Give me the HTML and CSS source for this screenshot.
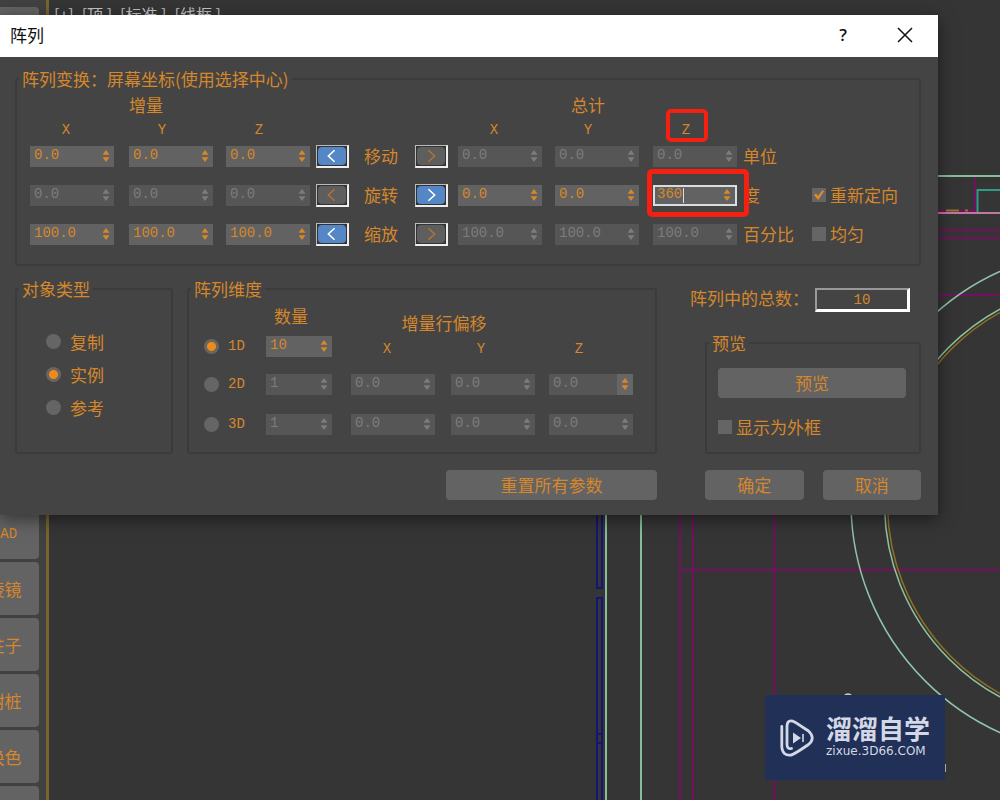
FILE: index.html
```html
<!DOCTYPE html>
<html lang="zh-CN">
<head>
<meta charset="utf-8">
<title>阵列</title>
<link rel="stylesheet" href="styles.css">
</head>
<body>
<div class="workspace">
  <aside class="toolbar">
    <button class="tool" aria-label="工具"></button>
    <div class="tool-group">
      <button class="tool latin">CAD</button>
      <button class="tool">棱镜</button>
      <button class="tool">柱子</button>
      <button class="tool">树桩</button>
      <button class="tool">换色</button>
      <button class="tool" aria-label="更多"></button>
    </div>
  </aside>
  <main class="viewport">
    <div class="view-menu"><span>[+]</span><span>[顶 ]</span><span>[标准 ]</span><span>[线框 ]</span></div>
  </main>

  <svg class="drawing" aria-hidden="true">
    <g fill="none" stroke="#74105f" stroke-width="2">
      <path d="M680 510V800M693 510V800M774.500 510V800M680 570H1000M930 230H1000M930 238H1000M930 295H1000M930 211H976M975 177V212"/>
    </g>
    <g fill="none" stroke="#151577" stroke-width="2">
      <path d="M597 510V588H602V510M597 800V598H602V800M597 734H602M597 743H602"/>
    </g>
    <path d="M606 510V800M641 510V800M930 176H1000" fill="none" stroke="#86bd9b" stroke-width="2"/>
    <path d="M1000 190H977.500V212" fill="none" stroke="#2f9c85" stroke-width="2"/>
    <path d="M930 213H1000" stroke="#c078a0" stroke-width="2"/>
    <path d="M946 210.500H959M965 210.500H968" stroke="#8a7a28" stroke-width="2"/>
    <g fill="none" stroke-width="1.500">
      <circle cx="1104" cy="502" r="253" stroke="#8fc4ab"/>
      <circle cx="1105" cy="503" r="217.500" stroke="#8f731f"/>
      <circle cx="1105" cy="503" r="220.500" stroke="#8fc4a0"/>
    </g>
    <path d="M844 696Q848 692 852 696M945 764V772" fill="none" stroke="#ccc" stroke-width="1.500"/>
  </svg>

  <section class="dialog" role="dialog" aria-labelledby="dlg-title">
    <header class="titlebar">
      <h1 id="dlg-title">阵列</h1>
      <button class="win-btn" aria-label="帮助">?</button>
      <button class="win-btn" aria-label="关闭"><svg width="16" height="16" viewBox="0 0 16 16"><path d="M1 1L15 15M15 1L1 15" stroke="#111" stroke-width="1.500"/></svg></button>
    </header>
    <form class="body">
      <fieldset class="group">
        <legend>阵列变换：屏幕坐标(使用选择中心)</legend>
        <div class="transform">
          <span class="caption c2">增量</span><span class="caption c8 head-wide">总计</span>
          <span class="axis c1">X</span><span class="axis c2">Y</span><span class="axis c3">Z</span>
          <span class="axis c7">X</span><span class="axis c8">Y</span><span class="axis c9 marked">Z</span>

          <span class="spin c1"><input aria-label="移动增量 X" value="0.0"><i></i></span>
          <span class="spin"><input aria-label="移动增量 Y" value="0.0"><i></i></span>
          <span class="spin"><input aria-label="移动增量 Z" value="0.0"><i></i></span>
          <button type="button" class="dir on" aria-label="移动增量"><svg viewBox="0 0 27 17"><path d="M16 3L10 8.500L16 14"/></svg></button>
          <span>移动</span>
          <button type="button" class="dir" aria-label="移动总计"><svg viewBox="0 0 27 17"><path d="M11 3L17 8.500L11 14"/></svg></button>
          <span class="spin off"><input aria-label="移动总计 X" value="0.0" disabled><i></i></span>
          <span class="spin off"><input aria-label="移动总计 Y" value="0.0" disabled><i></i></span>
          <span class="spin off"><input aria-label="移动总计 Z" value="0.0" disabled><i></i></span>
          <span>单位</span>

          <span class="spin off c1"><input aria-label="旋转增量 X" value="0.0" disabled><i></i></span>
          <span class="spin off"><input aria-label="旋转增量 Y" value="0.0" disabled><i></i></span>
          <span class="spin off"><input aria-label="旋转增量 Z" value="0.0" disabled><i></i></span>
          <button type="button" class="dir" aria-label="旋转增量"><svg viewBox="0 0 27 17"><path d="M16 3L10 8.500L16 14"/></svg></button>
          <span>旋转</span>
          <button type="button" class="dir on" aria-label="旋转总计"><svg viewBox="0 0 27 17"><path d="M11 3L17 8.500L11 14"/></svg></button>
          <span class="spin"><input aria-label="旋转总计 X" value="0.0"><i></i></span>
          <span class="spin"><input aria-label="旋转总计 Y" value="0.0"><i></i></span>
          <span class="spin active marked"><input aria-label="旋转总计 Z" value="360"><b class="caret"></b><i></i></span>
          <span>度</span>
          <label class="check"><input type="checkbox" checked>重新定向</label>

          <span class="spin c1"><input aria-label="缩放增量 X" value="100.0"><i></i></span>
          <span class="spin"><input aria-label="缩放增量 Y" value="100.0"><i></i></span>
          <span class="spin"><input aria-label="缩放增量 Z" value="100.0"><i></i></span>
          <button type="button" class="dir on" aria-label="缩放增量"><svg viewBox="0 0 27 17"><path d="M16 3L10 8.500L16 14"/></svg></button>
          <span>缩放</span>
          <button type="button" class="dir" aria-label="缩放总计"><svg viewBox="0 0 27 17"><path d="M11 3L17 8.500L11 14"/></svg></button>
          <span class="spin off"><input aria-label="缩放总计 X" value="100.0" disabled><i></i></span>
          <span class="spin off"><input aria-label="缩放总计 Y" value="100.0" disabled><i></i></span>
          <span class="spin off"><input aria-label="缩放总计 Z" value="100.0" disabled><i></i></span>
          <span>百分比</span>
          <label class="check"><input type="checkbox">均匀</label>
        </div>
      </fieldset>

      <div class="columns">
        <fieldset class="group">
          <legend>对象类型</legend>
          <div class="types">
            <label class="radio"><input type="radio" name="type">复制</label>
            <label class="radio"><input type="radio" name="type" checked>实例</label>
            <label class="radio"><input type="radio" name="type">参考</label>
          </div>
        </fieldset>

        <fieldset class="group">
          <legend>阵列维度</legend>
          <div class="dims">
            <span class="caption c2 count-head">数量</span><span class="caption offset-head">增量行偏移</span>
            <label class="radio mono c1"><input type="radio" name="dim" checked>1D</label>
            <span class="spin small"><input aria-label="1D 数量" value="10"><i></i></span>
            <span class="axis c3">X</span><span class="axis c4">Y</span><span class="axis c5">Z</span>
            <label class="radio mono c1"><input type="radio" name="dim">2D</label>
            <span class="spin small off"><input aria-label="2D 数量" value="1" disabled><i></i></span>
            <span class="spin off"><input aria-label="2D X" value="0.0" disabled><i></i></span>
            <span class="spin off"><input aria-label="2D Y" value="0.0" disabled><i></i></span>
            <span class="spin off hot"><input aria-label="2D Z" value="0.0" disabled><i></i></span>
            <label class="radio mono c1"><input type="radio" name="dim">3D</label>
            <span class="spin small off"><input aria-label="3D 数量" value="1" disabled><i></i></span>
            <span class="spin off"><input aria-label="3D X" value="0.0" disabled><i></i></span>
            <span class="spin off"><input aria-label="3D Y" value="0.0" disabled><i></i></span>
            <span class="spin off"><input aria-label="3D Z" value="0.0" disabled><i></i></span>
          </div>
        </fieldset>

        <div class="side">
          <div class="total"><label for="total">阵列中的总数：</label><input id="total" value="10" readonly></div>
          <fieldset class="group preview">
            <legend>预览</legend>
            <div class="preview-body">
              <button type="button" class="btn">预览</button>
              <label class="check"><input type="checkbox">显示为外框</label>
            </div>
          </fieldset>
        </div>
      </div>

      <footer class="columns actions">
        <button type="button" class="btn reset">重置所有参数</button>
        <div class="confirm">
          <button type="button" class="btn">确定</button>
          <button type="button" class="btn">取消</button>
        </div>
      </footer>
    </form>
  </section>

  <div class="brand">
    <svg width="34" height="38" viewBox="0 0 34 38" fill="none" stroke="#d3d8e6" stroke-linecap="round" stroke-linejoin="round">
      <path stroke-width="2.800" d="M1.800 7.500V28Q2.500 37 11 36Q14 35.500 28.500 25.500Q36 19 28.500 12L15 3.200Q7.500 -0.500 7 7V25.500Q7 30.500 11.500 29.500"/>
      <path d="M13 13.500L21 19L13 24.500Z" fill="#d3d8e6" stroke="none"/>
      <path stroke-width="1.600" d="M23 15.500V22.500"/>
    </svg>
    <div class="brand-text"><strong>溜溜自学</strong><span>zixue.3D66.COM</span></div>
  </div>
</div>
</body>
</html>
```
FILE: styles.css
```css
* { box-sizing: border-box; }

html, body { height: 100%; }

body {
  margin: 0;
  overflow: hidden;
  background: #353535;
  color: #d6872b;
  font: 17px/20px "Noto Sans CJK SC", sans-serif;
}

button, input { font: inherit; color: inherit; margin: 0; }
button { border: 0; padding: 0; }

/* Workspace behind the dialog */
.workspace { position: relative; display: flex; height: 100%; overflow: hidden; }

.toolbar {
  display: flex;
  flex-direction: column;
  justify-content: space-between;
  flex: none;
  width: 49px;
  padding-top: 7px;
  background: #414141;
  border-right: 3px solid #77652b;
}

.tool-group { display: flex; flex-direction: column; gap: 3px; margin-bottom: -39px; }

.tool {
  flex: none;
  width: 69px;
  height: 53px;
  margin-left: -30px;
  border-radius: 4px;
  background: #636363;
}

.tool.latin { padding-top: 2px; font: 14px/20px "Liberation Mono", monospace; }

.viewport { flex: 1; }
.view-menu { display: flex; gap: 8px; padding: 4px 5px; color: #c4c4c4; font-size: 16px; }

.drawing { position: absolute; inset: 0; width: 100%; height: 100%; }

/* Dialog window */
.dialog {
  position: absolute;
  top: 15px;
  left: 0;
  right: 62px;
  background: #444;
  box-shadow: 0 4px 16px rgba(0, 0, 0, 0.5);
}

.titlebar { display: flex; align-items: center; height: 42px; padding: 0 2px 2px 10px; background: #fff; color: #111; }
.titlebar h1 { flex: 1; margin: 0; font-size: 17px; font-weight: 400; }
.win-btn { display: grid; place-items: center; width: 62px; height: 40px; background: none; font-family: "Open Sans", sans-serif; font-weight: 600; }

.body { padding: 12px 17px 15px 15px; }

.group { min-width: 0; margin: 0; padding: 0; border: 2px solid #3b3b3b; border-radius: 3px; }
.group legend { height: 20px; margin-left: 2px; padding: 0 3px; }

.transform {
  display: grid;
  grid-template-columns: 99fr 97fr 90fr 48fr 51fr 43fr 97fr 98fr 90fr 69fr 107fr;
  grid-template-rows: 26px 24px 28px 50px 28px;
  align-items: center;
  justify-items: start;
  padding: 3px 0 16px 13px;
  white-space: nowrap;
}

.c1 { grid-column: 1; }
.c2 { grid-column: 2; }
.c3 { grid-column: 3; }
.c4 { grid-column: 4; }
.c5 { grid-column: 5; }
.c7 { grid-column: 7; }
.c8 { grid-column: 8; }
.c9 { grid-column: 9; }

.axis, .head-wide { width: 66px; text-align: center; }
.axis { font: 14px/20px "Liberation Mono", monospace; }
.axis.c1, .axis.c7 { width: 72px; }

/* Numeric field with spinner arrows */
.spin { display: flex; align-items: center; width: 84px; height: 21px; background: #626262; }
.spin.small { width: 66px; }
.spin input {
  flex: 1;
  min-width: 0;
  height: 21px;
  padding: 0 0 2px 4px;
  border: 0;
  outline: 0;
  background: none;
  font: 14px/19px "Liberation Mono", monospace;
}
.spin i { display: grid; place-items: center; flex: none; width: 16px; height: 21px; }
.spin i::before {
  content: "";
  width: 7px;
  height: 12px;
  background: currentColor;
  clip-path: polygon(50% 0, 100% 40%, 0 40%, 50% 0, 50% 100%, 0 60%, 100% 60%, 50% 100%);
}
.spin.off { background: #565656; color: #7c7c7c; }
.spin.hot i { background: #666; color: #d6872b; }
.spin.active { border: 2px solid #d9dde2; }
.spin.active input { flex: none; width: 28px; padding-left: 2px; }
.caret { width: 1px; height: 15px; margin-right: auto; background: #ddd; }

/* Red call-out frames */
.marked { position: relative; }
.marked::after { content: ""; position: absolute; z-index: 1; border: 4px solid #f5200f; border-radius: 5px; }
.axis.marked::after { inset: -11px 11px -2px 13px; }
.spin.marked::after { inset: -18px -14px -13px -8px; border-width: 5px; }

.dir {
  width: 33px;
  height: 23px;
  border: 2px solid #eee;
  border-top: 1px solid #bbb;
  border-left: 1px solid #bbb;
  background: #333;
  padding: 1px;
  color: #b0733a;
}
.dir svg { display: block; width: 100%; height: 100%; border-radius: 4px; background: #5e5e5e; }
.dir path { fill: none; stroke: currentColor; stroke-width: 1.5; }
.dir.on { color: #fff; }
.dir.on svg { background: #5586c6; }

.check, .radio { display: flex; align-items: center; }
.check { gap: 4px; }
.radio { gap: 9px; }

.check input, .radio input { appearance: none; flex: none; background: #656565; }
.check input { display: grid; place-items: center; width: 14px; height: 14px; }
.check input:checked::before {
  content: "";
  width: 10px;
  height: 10px;
  background: #e38a22;
  clip-path: polygon(0 50%, 20% 35%, 40% 60%, 85% 0, 100% 12%, 42% 100%);
}
.radio input { width: 15px; height: 15px; border-radius: 50%; }
.radio input:checked { background: radial-gradient(circle, #ee8b1c 4px, #6a6560 5px); }
.mono { font: 14px/20px "Liberation Mono", monospace; }

/* Lower area */
.columns { display: grid; grid-template-columns: 158fr 470fr 250fr; column-gap: 14px; margin-top: 13px; }

.types { display: flex; flex-direction: column; padding: 26px 0 0 29px; }
.types .radio { height: 33px; }

.dims {
  display: grid;
  grid-template-columns: 62fr 85fr 100fr 98fr 106fr;
  grid-template-rows: 34px 26px 50px 30px;
  align-items: center;
  justify-items: start;
  padding: 0 0 13px 15px;
}
.dims .axis { align-self: end; width: 60px; }
.dims .axis.c3 { width: 72px; }
.count-head { padding-left: 8px; }
.offset-head { grid-column: 3 / span 2; align-self: end; justify-self: center; padding-right: 12px; }

.side { display: flex; flex-direction: column; justify-content: space-between; padding-left: 34px; }
.total { display: flex; justify-content: space-between; align-items: center; margin: 9px 11px 0 -15px; white-space: nowrap; }
.total label { flex: none; width: 120px; height: 24px; }
.total input {
  width: 95px;
  height: 24px;
  padding: 0;
  border: 2px solid #999;
  border-right: 3px solid #fff;
  border-bottom: 3px solid #fff;
  background: none;
  font: 14px/18px "Liberation Mono", monospace;
  text-align: center;
}

.preview-body { display: flex; flex-direction: column; gap: 19px; padding: 15px 13px 15px 11px; }

.btn { height: 30px; border-radius: 4px; background: #636363; }

.actions { margin-top: 16px; }
.reset { grid-column: 2; justify-self: end; width: 211px; }
.confirm { display: grid; grid-template-columns: 1fr 1fr; gap: 19px; padding-left: 34px; }

/* Site badge */
.brand {
  position: absolute;
  right: 55px;
  bottom: 20px;
  display: flex;
  align-items: center;
  gap: 12px;
  width: 180px;
  height: 85px;
  padding-left: 15px;
  background: #213056;
  color: #d3d8e6;
}
.brand-text { display: flex; flex-direction: column; gap: 4px; padding-bottom: 3px; }
.brand-text strong { font-size: 26px; line-height: 26px; font-weight: 700; }
.brand-text span { font: 12px/12px "DejaVu Sans", sans-serif; }
```
